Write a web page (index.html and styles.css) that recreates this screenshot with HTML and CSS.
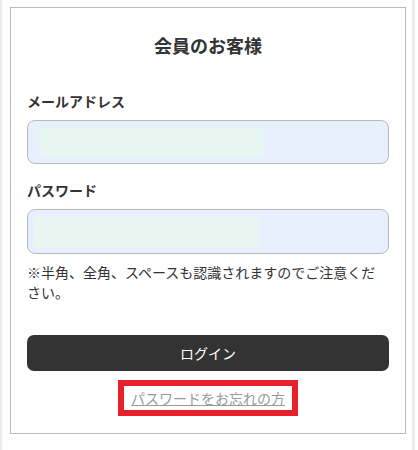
FILE: index.html
```html
<!DOCTYPE html>
<html lang="ja">
<head>
<meta charset="utf-8">
<title>会員のお客様</title>
<link rel="stylesheet" href="styles.css">
</head>
<body>
<div class="page">
  <div class="card">
    <h2 class="title">会員のお客様</h2>
    <label class="label">メールアドレス</label>
    <div class="input"><span class="fill fill-email"></span></div>
    <label class="label label-pw">パスワード</label>
    <div class="input"><span class="fill fill-pw"></span></div>
    <p class="note">※半角、全角、スペースも認識されますのでご注意ください。</p>
    <button class="btn">ログイン</button>
    <div class="forgot-row">
      <a class="forgot" href="#">パスワードをお忘れの方</a>
    </div>
  </div>
</div>
</body>
</html>
```
FILE: styles.css
```css
html, body {
  margin: 0;
  padding: 0;
  background: #fff;
}
body {
  font-family: "Noto Sans CJK JP", "Noto Sans", sans-serif;
  color: #333;
}
.page {
  box-sizing: border-box;
  width: 415px;
  height: 450px;
  border-left: 2px solid #ececec;
  border-right: 3px solid #ececec;
  padding: 7px 0 0 8px;
}
.card {
  box-sizing: border-box;
  width: 396px;
  height: 427px;
  border: 1px solid #bbb;
  padding: 24px 16px 0 16px;
  display: flex;
  flex-direction: column;
}
.title {
  margin: 0;
  font-size: 18px;
  line-height: 26px;
  font-weight: 700;
  text-align: center;
  color: #333;
}
.label {
  display: block;
  margin-top: 33px;
  font-size: 14px;
  line-height: 20px;
  font-weight: 700;
  color: #333;
}
.label-pw {
  margin-top: 16px;
}
.input {
  box-sizing: border-box;
  margin-top: 9px;
  height: 44px;
  border: 1px solid #b9b9b9;
  border-radius: 8px;
  background: #e8f0fe;
  display: flex;
  align-items: center;
}
.label-pw + .input {
  height: 45px;
}
.fill {
  display: block;
  background: #e8f6f2;
}
.fill-email {
  margin-left: 12px;
  width: 223px;
  height: 28px;
}
.fill-pw {
  margin-left: 6px;
  width: 225px;
  height: 30px;
}
.note {
  margin: 8px 0 0 0;
  font-size: 14px;
  line-height: 20px;
  color: #333;
}
.btn {
  margin-top: 33px;
  height: 36px;
  border: none;
  border-radius: 7px;
  background: #333;
  color: #fff;
  font-family: inherit;
  font-size: 14px;
  line-height: 20px;
  padding: 0;
}
.forgot-row {
  margin-top: 9px;
  display: flex;
  justify-content: center;
}
.forgot {
  display: inline-block;
  border: 6px solid #e8202a;
  padding: 0 7px;
  font-size: 14px;
  line-height: 24px;
  color: #999;
  text-decoration: underline;
}
```
